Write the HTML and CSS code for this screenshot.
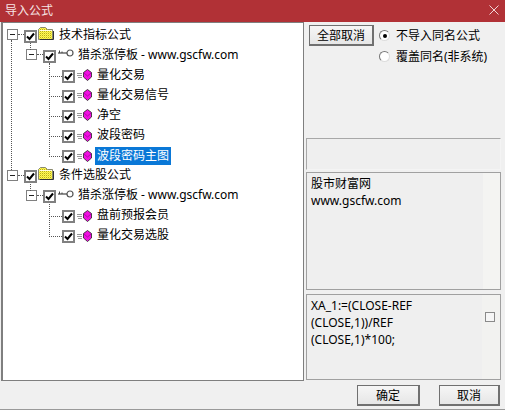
FILE: index.html
```html
<!DOCTYPE html>
<html lang="zh">
<head>
<meta charset="utf-8">
<title>导入公式</title>
<link rel="stylesheet" href="styles.css">
</head>
<body>
<svg class="defs" width="0" height="0" aria-hidden="true">
  <defs>
    <pattern id="dither" width="2" height="2" patternUnits="userSpaceOnUse">
      <rect width="2" height="2" fill="#ffff50"/>
      <rect width="1" height="1" fill="#b8a820"/>
      <rect x="1" y="1" width="1" height="1" fill="#e8d840"/>
    </pattern>
    <symbol id="tick" viewBox="0 0 9 9"><path d="M1 4.5 L3.5 7 L8 1.5" fill="none" stroke="#000" stroke-width="2"/></symbol>
    <symbol id="folder" viewBox="0 0 16 13">
      <path d="M0.5 12.5 V2.5 L2.5 0.5 H7.5 L9.5 2.5 H14.5 V12.5 Z" fill="url(#dither)" stroke="#8a8a70"/>
      <path d="M1.5 3.5 H14" stroke="#fffbe0" fill="none"/>
      <path d="M15.5 4 V12.5 H2" stroke="#333" fill="none"/>
    </symbol>
    <symbol id="key" viewBox="0 0 16 8">
      <circle cx="12" cy="4" r="3" fill="#fff" stroke="#555" stroke-width="1.2"/>
      <path d="M0 4 H9" stroke="#444" stroke-width="1.2" fill="none"/>
      <path d="M1.5 4 V1.5 M4 4 V2.5" stroke="#444" fill="none"/>
    </symbol>
    <symbol id="gem" viewBox="0 0 16 12">
      <path d="M0 4.5 H5 M0 6.5 H5 M1 8.5 H5" stroke="#999" fill="none"/>
      <path d="M10.5 0.5 L14.5 3.5 V8 L10.5 11.5 L6.5 8 V3.5 Z" fill="#f010e0" stroke="#222" stroke-width="0.8"/>
      <path d="M7 4 L10.5 7 L14 4" stroke="#a000a0" stroke-width="0.8" fill="none"/>
    </symbol>
  </defs>
</svg>
<div class="window">
  <header class="titlebar">
    <span class="title">导入公式</span>
    <svg class="close" viewBox="0 0 10 10" aria-label="关闭"><path d="M0.5 0.5 L9.5 9.5 M9.5 0.5 L0.5 9.5" stroke="#f0d4d4" fill="none"/></svg>
  </header>
  <main class="main">
    <div class="tree">
      <div class="group">
        <div class="row lvl0">
          <span class="exp"></span><span class="dots short"></span>
          <span class="check"><svg><use href="#tick"/></svg></span>
          <svg class="ico-folder"><use href="#folder"/></svg>
          <span class="label root-label">技术指标公式</span>
        </div>
        <div class="sub">
          <div class="row lvl1">
            <span class="exp"></span><span class="dots short"></span>
            <span class="check"><svg><use href="#tick"/></svg></span>
            <svg class="ico-key"><use href="#key"/></svg>
            <span class="label">猎杀涨停板 - www.gscfw.com</span>
          </div>
          <div class="leaves">
            <div class="row lvl2"><span class="dots"></span><span class="check"><svg><use href="#tick"/></svg></span><svg class="ico-gem"><use href="#gem"/></svg><span class="label">量化交易</span></div>
            <div class="row lvl2"><span class="dots"></span><span class="check"><svg><use href="#tick"/></svg></span><svg class="ico-gem"><use href="#gem"/></svg><span class="label">量化交易信号</span></div>
            <div class="row lvl2"><span class="dots"></span><span class="check"><svg><use href="#tick"/></svg></span><svg class="ico-gem"><use href="#gem"/></svg><span class="label">净空</span></div>
            <div class="row lvl2"><span class="dots"></span><span class="check"><svg><use href="#tick"/></svg></span><svg class="ico-gem"><use href="#gem"/></svg><span class="label">波段密码</span></div>
            <div class="row lvl2"><span class="dots"></span><span class="check"><svg><use href="#tick"/></svg></span><svg class="ico-gem"><use href="#gem"/></svg><span class="label selected">波段密码主图</span></div>
          </div>
        </div>
      </div>
      <div class="group">
        <div class="row lvl0">
          <span class="exp"></span><span class="dots short"></span>
          <span class="check"><svg><use href="#tick"/></svg></span>
          <svg class="ico-folder"><use href="#folder"/></svg>
          <span class="label root-label">条件选股公式</span>
        </div>
        <div class="sub">
          <div class="row lvl1">
            <span class="exp"></span><span class="dots short"></span>
            <span class="check"><svg><use href="#tick"/></svg></span>
            <svg class="ico-key"><use href="#key"/></svg>
            <span class="label">猎杀涨停板 - www.gscfw.com</span>
          </div>
          <div class="leaves">
            <div class="row lvl2"><span class="dots"></span><span class="check"><svg><use href="#tick"/></svg></span><svg class="ico-gem"><use href="#gem"/></svg><span class="label">盘前预报会员</span></div>
            <div class="row lvl2"><span class="dots"></span><span class="check"><svg><use href="#tick"/></svg></span><svg class="ico-gem"><use href="#gem"/></svg><span class="label">量化交易选股</span></div>
          </div>
        </div>
      </div>
    </div>
    <aside class="side">
      <div class="options">
        <button class="btn btn-all" type="button">全部取消</button>
        <div class="radios">
          <div class="radio-row"><span class="radio on"></span><span>不导入同名公式</span></div>
          <div class="radio-row"><span class="radio"></span><span>覆盖同名(非系统)</span></div>
        </div>
      </div>
      <div class="box box-empty"></div>
      <div class="box box-info">
        <div class="box-text">股市财富网<br>www.gscfw.com</div>
      </div>
      <div class="box box-code">
        <div class="box-text code-text">XA_1:=(CLOSE-REF<br>(CLOSE,1))/REF<br>(CLOSE,1)*100;</div>
        <span class="mini-check"></span>
      </div>
    </aside>
  </main>
  <footer class="footer">
    <button class="btn btn-ok" type="button">确定</button>
    <button class="btn btn-cancel" type="button">取消</button>
  </footer>
</div>
</body>
</html>
```
FILE: styles.css
```css
* { box-sizing: border-box; }
html, body { margin: 0; padding: 0; }
body {
  width: 505px;
  height: 410px;
  overflow: hidden;
  font: 12px/17px "Noto Sans", "Noto Sans CJK SC", sans-serif;
  color: #000;
  background: #f0f0f0;
}
.defs { display: block; height: 0; }
.window {
  width: 505px;
  height: 410px;
  display: flex;
  flex-direction: column;
  border-bottom: 1px solid #9a9a9a;
}
.titlebar {
  height: 22px;
  flex: none;
  background: #b13136;
  color: #f6e4e4;
  display: flex;
  align-items: center;
  justify-content: space-between;
  padding: 0 6px 2px 5px;
}
.close { width: 10px; height: 10px; }
.main { display: flex; height: 359px; flex: none; }
.tree {
  width: 303px;
  margin-left: 1px;
  flex: none;
  background: #fff;
  border: 1px solid #7f7f7f;
  border-width: 1px 1px 1px 2px;
  padding-top: 3px;
  overflow: hidden;
}
.group { position: relative; }
.row {
  height: 20.1px;
  display: flex;
  align-items: center;
  white-space: nowrap;
}
.lvl0 { padding-left: 4px; }
.lvl1 { padding-left: 23px; }
.lvl2 { padding-left: 46px; }
.exp {
  width: 11px;
  height: 11px;
  flex: none;
  border: 1px solid #808080;
  background: linear-gradient(#222, #222) center / 5px 1px no-repeat #fff;
  margin-top: -3px;
}
.dots {
  flex: none;
  width: 13px;
  height: 0;
  border-top: 1px dotted #555;
}
.dots.short { width: 6px; margin-top: -3px; }
.check {
  width: 13px;
  height: 13px;
  flex: none;
  border: 2px solid #808080;
  background: #fff;
  display: flex;
  align-items: center;
  justify-content: center;
}
.check svg { width: 9px; height: 9px; display: block; }
.ico-folder { width: 16px; height: 13px; flex: none; margin: -6px 0 0 1px; }
.ico-key { width: 16px; height: 8px; flex: none; margin: -6px 0 0 2px; }
.ico-gem { width: 16px; height: 12px; flex: none; margin: -2px 0 0 2px; }
.label { padding: 0 2px; margin: 0 0 4px 2px; line-height: 17px; }
.root-label { margin-left: 3px; }
.selected {
  background: #0a78d7;
  color: #fff;
  height: 18px;
  margin-bottom: 1px;
}
.sub { position: relative; }
/* dotted tree guides hanging behind the rows */
.group::before {
  content: "";
  position: absolute;
  left: 8px;
  top: 14px;
  bottom: -3px;
  border-left: 1px dotted #555;
}
.group:last-child::before { display: none; }
.sub::before {
  content: "";
  position: absolute;
  left: 27px;
  top: -3px;
  height: 7px;
  border-left: 1px dotted #555;
}
.leaves { position: relative; }
.leaves::before {
  content: "";
  position: absolute;
  left: 46px;
  top: -3px;
  bottom: 10px;
  border-left: 1px dotted #555;
}
.side {
  flex: 1;
  display: flex;
  flex-direction: column;
  padding: 3px 4px 0 2px;
  min-width: 0;
}
.options {
  display: flex;
  height: 113px;
  padding-left: 3px;
  gap: 5px;
  flex: none;
}
.btn {
  font: inherit;
  color: #000;
  padding: 0;
  border: 1px solid #707070;
  border-width: 1px 2px 2px 1px;
  background: linear-gradient(#f6f6f6, #e6e6e6);
}
.btn-all { width: 65px; height: 21px; }
.radios { display: flex; flex-direction: column; gap: 4px; padding-top: 2px; }
.radio-row { display: flex; align-items: center; gap: 6px; height: 17px; }
.radio {
  width: 11px;
  height: 11px;
  border-radius: 50%;
  background: #fff;
  border: 1px solid;
  border-color: #777 #ddd #ddd #777;
  position: relative;
  flex: none;
}
.radio.on::after {
  content: "";
  position: absolute;
  left: 2.5px;
  top: 2.5px;
  width: 4px;
  height: 4px;
  border-radius: 50%;
  background: #000;
}
.box {
  flex: none;
  border: 1px solid #a0a0a0;
  background: #efefef;
}
.box-empty { height: 32px; margin-bottom: 2px; border-color: #a8a8a8 #f4f4f4 #f4f4f4 #a8a8a8; }
.box-info {
  height: 118px;
  margin-bottom: 4px;
  background: linear-gradient(90deg, #efefef 176px, #f4f4f2 176px);
  padding: 2px 4px;
}
.box-code {
  height: 86px;
  display: flex;
  background: linear-gradient(90deg, #efefef 175px, #f2f2f0 175px);
  padding: 2px 4px;
}
.box-text { line-height: 17px; }
.code-text { width: 172px; }
.mini-check {
  width: 10px;
  height: 10px;
  border: 1px solid #8a8a8a;
  background: #f6f6f6;
  margin: 15px 0 0 2px;
  flex: none;
}
.footer {
  flex: 1;
  display: flex;
  justify-content: flex-end;
  padding: 4px 5px 0 0;
  gap: 19px;
}
.btn-ok { width: 63px; height: 21px; }
.btn-cancel { width: 61px; height: 21px; }
```
